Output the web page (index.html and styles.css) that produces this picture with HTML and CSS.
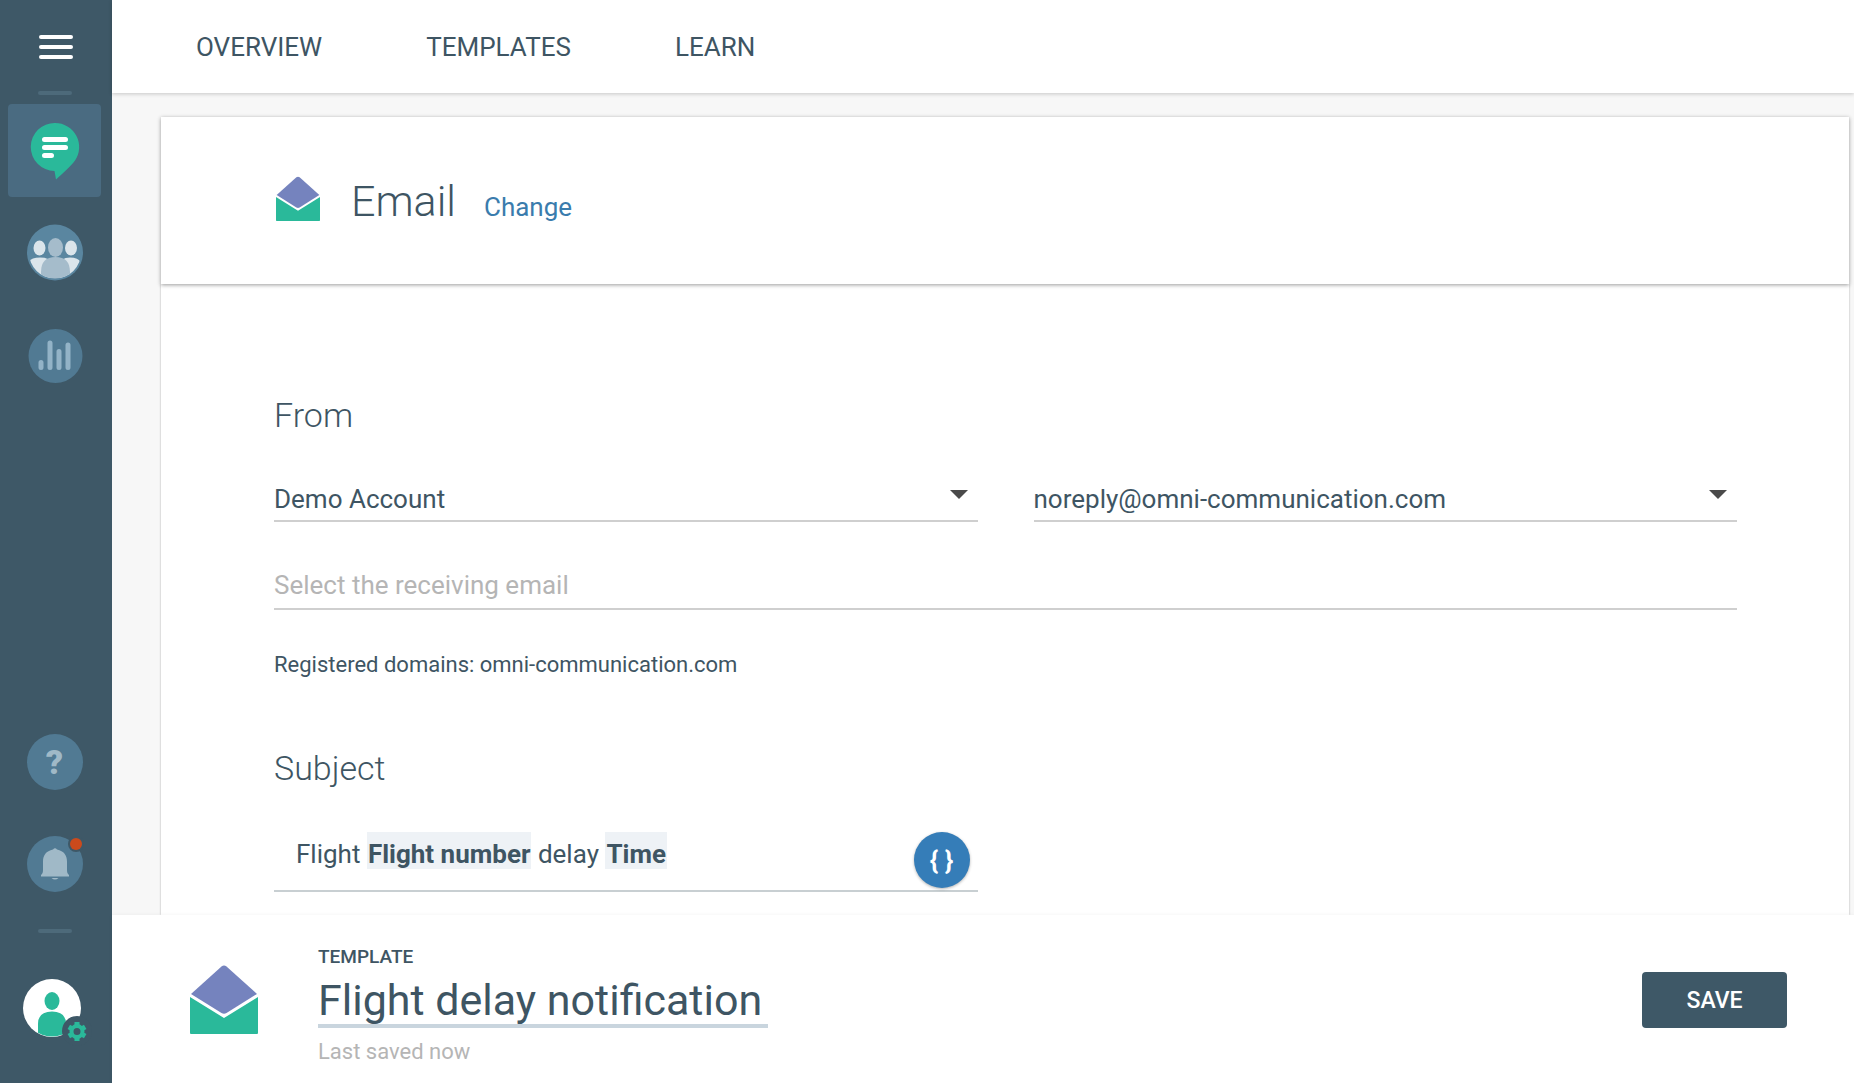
FILE: index.html
```html
<!DOCTYPE html>
<html lang="en">
<head>
    <meta charset="UTF-8">
    <meta name="viewport" content="width=device-width, initial-scale=1.0">
    <title>Flight delay notification</title>
    <link rel="stylesheet" href="styles.css">
</head>
<body>
    <aside class="sidebar">
        <button class="menu-btn" aria-label="Menu">
            <span class="menu-line"></span>
            <span class="menu-line"></span>
            <span class="menu-line"></span>
        </button>
        <hr class="divider">
        <nav class="side-nav">
            <a href="#" class="side-item active" aria-label="Messages">
                <svg viewBox="0 0 93 93">
                    <path fill="#2ab99a" d="M47 19a24 24 0 0 1 20 37.500C63 62 54 70 48 75.500L46.500 67A24 24 0 0 1 47 19z"/>
                    <path stroke="#fff" stroke-width="5" stroke-linecap="round" d="M36.500 35.500h21M36.500 43.500h21M36.500 51.500h7"/>
                </svg>
            </a>
            <a href="#" class="side-item" aria-label="People">
                <svg viewBox="0 0 93 93">
                    <clipPath id="people"><circle cx="47" cy="45.500" r="26"/></clipPath>
                    <circle cx="47" cy="45.500" r="28" fill="#5a86a0"/>
                    <g clip-path="url(#people)">
                        <g fill="#dbe5eb">
                            <ellipse cx="31.500" cy="41" rx="6" ry="7.500"/>
                            <ellipse cx="63" cy="41" rx="6" ry="7.500"/>
                            <path d="M20 75V58q0-7.500 12-7.500t10 7.500v17zM52 75V58q0-7.500 10-7.500t12 7.500v17z"/>
                        </g>
                        <path fill="#a5bccb" d="M33 75V65q0-15 14.500-15T62 65v10z"/>
                    </g>
                    <ellipse cx="47.500" cy="40.500" rx="7.500" ry="9.500" fill="#a5bccb"/>
                </svg>
            </a>
            <a href="#" class="side-item" aria-label="Analytics">
                <svg viewBox="0 0 93 93">
                    <circle cx="47.500" cy="46" r="27" fill="#517a93"/>
                    <path stroke="#93b3c7" stroke-width="5" stroke-linecap="round" d="M33 52.500v5M42 33v24.500M51 41.500v16M60 35v22.500"/>
                </svg>
            </a>
        </nav>
        <nav class="side-nav bottom">
            <a href="#" class="side-item" aria-label="Help">
                <span class="help">?</span>
            </a>
            <a href="#" class="side-item" aria-label="Notifications">
                <svg viewBox="0 0 93 93">
                    <circle cx="47" cy="46" r="28" fill="#517a93"/>
                    <path fill="#a0b9c7" d="M45 31.500q2-2.500 4 0c7 1.500 10 6 10 12V52c0 2 .5 4 2 5v1.500H33V57c1.500-1 2-3 2-5v-8.500c0-6 3-10.500 10-12zM43.500 60h7q-3.500 3-7 0z"/>
                    <circle cx="68" cy="26" r="8" fill="#3e5867"/>
                    <circle cx="68" cy="26" r="6" fill="#cb4a1c"/>
                </svg>
            </a>
        </nav>
        <hr class="divider">
        <a href="#" class="side-item avatar" aria-label="Account settings">
            <svg viewBox="0 0 93 93">
                <clipPath id="user"><circle cx="44" cy="46" r="28.500"/></clipPath>
                <circle cx="44" cy="46" r="29" fill="#fff"/>
                <g fill="#2ab99a" clip-path="url(#user)">
                    <ellipse cx="44" cy="39" rx="7.500" ry="9"/>
                    <path d="M30 80V62q0-12.500 14-12.500T58 62v18z"/>
                </g>
                <circle cx="69" cy="69" r="15" fill="#3e5867"/>
                <circle cx="69" cy="69.500" r="5.500" fill="none" stroke="#2ab99a" stroke-width="4"/>
                <path stroke="#2ab99a" stroke-width="5" d="M69 60v4M69 75v4M60.800 64.800l3.500 2M73.700 72.200l3.500 2M60.800 74.200l3.500-2M73.700 66.800l3.500-2"/>
            </svg>
        </a>
    </aside>

    <div class="page">
        <header class="topbar">
            <a href="#">OVERVIEW</a>
            <a href="#">TEMPLATES</a>
            <a href="#">LEARN</a>
        </header>

        <main class="content">
            <section class="channel">
                <svg class="channel-icon" viewBox="0 0 68 70">
                    <path fill="#2ab99a" d="M0 32l34 21 34-21v36q0 1-1 1H1q-1 0-1-1z"/>
                    <path fill="#7583be" d="M31.500 1.500q2.500-2 5 0L67 29 36.500 48q-2.500 1.500-5 0L1 29z"/>
                </svg>
                <h1>Email</h1>
                <a href="#">Change</a>
            </section>

            <form class="details">
                <h2>From</h2>
                <div class="row">
                    <div class="select">
                        <select aria-label="Account">
                            <option>Demo Account</option>
                        </select>
                    </div>
                    <div class="select">
                        <select aria-label="Sender address">
                            <option>noreply@omni-communication.com</option>
                        </select>
                    </div>
                </div>
                <input class="receiver" type="email" aria-label="Receiving email" placeholder="Select the receiving email">
                <p class="domains">Registered domains: omni-communication.com</p>

                <h2 id="subject-label">Subject</h2>
                <div class="row">
                    <div class="subject">
                        <div class="subject-text" role="textbox" contenteditable="true" aria-labelledby="subject-label">Flight <b>Flight number</b> delay <b>Time</b></div>
                        <button type="button" class="var-btn" aria-label="Insert variable">{ }</button>
                    </div>
                </div>
            </form>
        </main>

        <footer class="savebar">
            <svg class="template-icon" viewBox="0 0 68 70">
                <path fill="#2ab99a" d="M0 32l34 21 34-21v36q0 1-1 1H1q-1 0-1-1z"/>
                <path fill="#7583be" d="M31.500 1.500q2.500-2 5 0L67 29 36.500 48q-2.500 1.500-5 0L1 29z"/>
            </svg>
            <div class="template">
                <label for="template-name">TEMPLATE</label>
                <input id="template-name" type="text" value="Flight delay notification">
                <span class="saved">Last saved now</span>
            </div>
            <button class="save-btn">SAVE</button>
        </footer>
    </div>
</body>
</html>
```
FILE: styles.css
```css
* {
    box-sizing: border-box;
}
body {
    margin: 0;
    display: flex;
    height: 100vh;
    font-family: Roboto, sans-serif;
    font-size: 26px;
    color: #3e5563;
    background-color: #f7f7f7;
}
a {
    color: inherit;
    text-decoration: none;
}
button, input, select {
    font: inherit;
    color: inherit;
    border: none;
    background: none;
    padding: 0;
    outline: none;
}
button {
    cursor: pointer;
}
h1, h2, p {
    margin: 0;
}

/* sidebar */
.sidebar {
    width: 112px;
    flex-shrink: 0;
    display: flex;
    flex-direction: column;
    align-items: center;
    padding: 8px 3px 28px 0;
    background-color: #3e5867;
}
.menu-btn {
    width: 93px;
    height: 78px;
    padding-left: 2px;
    display: flex;
    flex-direction: column;
    align-items: center;
    justify-content: center;
    gap: 6px;
}
.menu-line {
    width: 34px;
    height: 4px;
    border-radius: 2px;
    background-color: #fff;
}
.divider {
    width: 34px;
    height: 4px;
    margin: 5px 0 9px;
    border: none;
    border-radius: 2px;
    background-color: #4d6a7a;
}
.side-nav {
    display: flex;
    flex-direction: column;
    gap: 10px;
}
.side-nav.bottom {
    margin-top: auto;
    padding-bottom: 13px;
}
.side-item {
    width: 93px;
    height: 93px;
    display: flex;
    align-items: center;
    justify-content: center;
    border-radius: 4px;
}
.side-item.active {
    background-color: #4a6b81;
}
.side-item svg {
    width: 100%;
    height: 100%;
}
.avatar {
    margin-top: 20px;
}
.help {
    width: 56px;
    height: 56px;
    border-radius: 50%;
    background-color: #517a93;
    color: #a0b9c7;
    font-size: 34px;
    font-weight: 900;
    line-height: 56px;
    text-align: center;
}

/* page */
.page {
    flex: 1;
    min-width: 0;
    display: flex;
    flex-direction: column;
}
.topbar {
    height: 93px;
    flex-shrink: 0;
    display: flex;
    align-items: center;
    gap: 104px;
    padding: 0 84px;
    background-color: #fff;
    box-shadow: 0 1px 4px rgba(0, 0, 0, 0.2);
}
.content {
    flex: 1;
    min-height: 0;
    overflow: auto;
    display: flex;
    flex-direction: column;
    padding: 24px 5px 0 49px;
}
.channel {
    position: relative;
    z-index: 1;
    flex-shrink: 0;
    display: flex;
    align-items: baseline;
    padding: 58px 112px 57px 115px;
    background-color: #fff;
    box-shadow: 0 1px 4px rgba(0, 0, 0, 0.4);
}
.channel-icon {
    width: 44px;
    height: 46px;
    margin-bottom: 4px;
    align-self: center;
}
.channel h1 {
    margin: 0 28px 0 31px;
    font-size: 43px;
    font-weight: 300;
    line-height: 52px;
}
.channel a {
    color: #3a7cad;
}
.details {
    flex: 1 0 auto;
    padding: 111px 112px 20px 113px;
    background-color: #fff;
    box-shadow: 0 0 2px rgba(0, 0, 0, 0.3);
}
.details h2 {
    font-size: 34px;
    font-weight: 300;
    line-height: 40px;
}
.row {
    display: grid;
    grid-template-columns: 1fr 1fr;
    gap: 56px;
}
.select {
    position: relative;
    margin-top: 49px;
    border-bottom: 2px solid #cfcfcf;
}
.select::after {
    content: "";
    position: absolute;
    top: 6px;
    right: 10px;
    border: 9px solid transparent;
    border-top-color: #4a4a4a;
    border-bottom: none;
    pointer-events: none;
}
.select select {
    width: 100%;
    height: 36px;
    padding-bottom: 6px;
    appearance: none;
}
.receiver {
    width: 100%;
    height: 48px;
    margin-top: 40px;
    border-bottom: 2px solid #cfcfcf;
}
.receiver::placeholder {
    color: #b5b5b5;
    opacity: 1;
}
.domains {
    margin: 39px 0 67px;
    font-size: 22px;
    line-height: 32px;
}
.subject {
    display: flex;
    align-items: flex-start;
    justify-content: space-between;
    margin-top: 40px;
    padding: 4px 8px 2px 22px;
    border-bottom: 2px solid #c8cfd2;
}
.subject-text {
    flex: 1;
    line-height: 44px;
    outline: none;
}
.subject-text b {
    padding: 7px 1px 0;
    background-color: #eef2f6;
}
.var-btn {
    width: 56px;
    height: 56px;
    border-radius: 50%;
    background-color: #357db8;
    box-shadow: 0 1px 3px rgba(0, 0, 0, 0.3);
    color: #fff;
    font-weight: 700;
}

/* save bar */
.savebar {
    flex-shrink: 0;
    display: flex;
    align-items: center;
    padding: 2px 67px 0 78px;
    background-color: #fff;
    box-shadow: 0 0 4px rgba(0, 0, 0, 0.05);
}
.template-icon {
    width: 68px;
    height: 70px;
}
.template {
    flex: 1;
    display: flex;
    flex-direction: column;
    align-items: flex-start;
    margin-left: 60px;
    padding: 26px 0 15px;
}
.template label {
    font-size: 19px;
    font-weight: 500;
    line-height: 28px;
}
.template input {
    width: 450px;
    height: 57px;
    padding-top: 4px;
    font-size: 43px;
    border-bottom: 4px solid #c9d5de;
}
.saved {
    margin-top: 8px;
    color: #b5b5b5;
    font-size: 22px;
    line-height: 32px;
}
.save-btn {
    width: 145px;
    height: 56px;
    border-radius: 4px;
    background-color: #3e5867;
    color: #fff;
    font-size: 23px;
    font-weight: 500;
}
```
